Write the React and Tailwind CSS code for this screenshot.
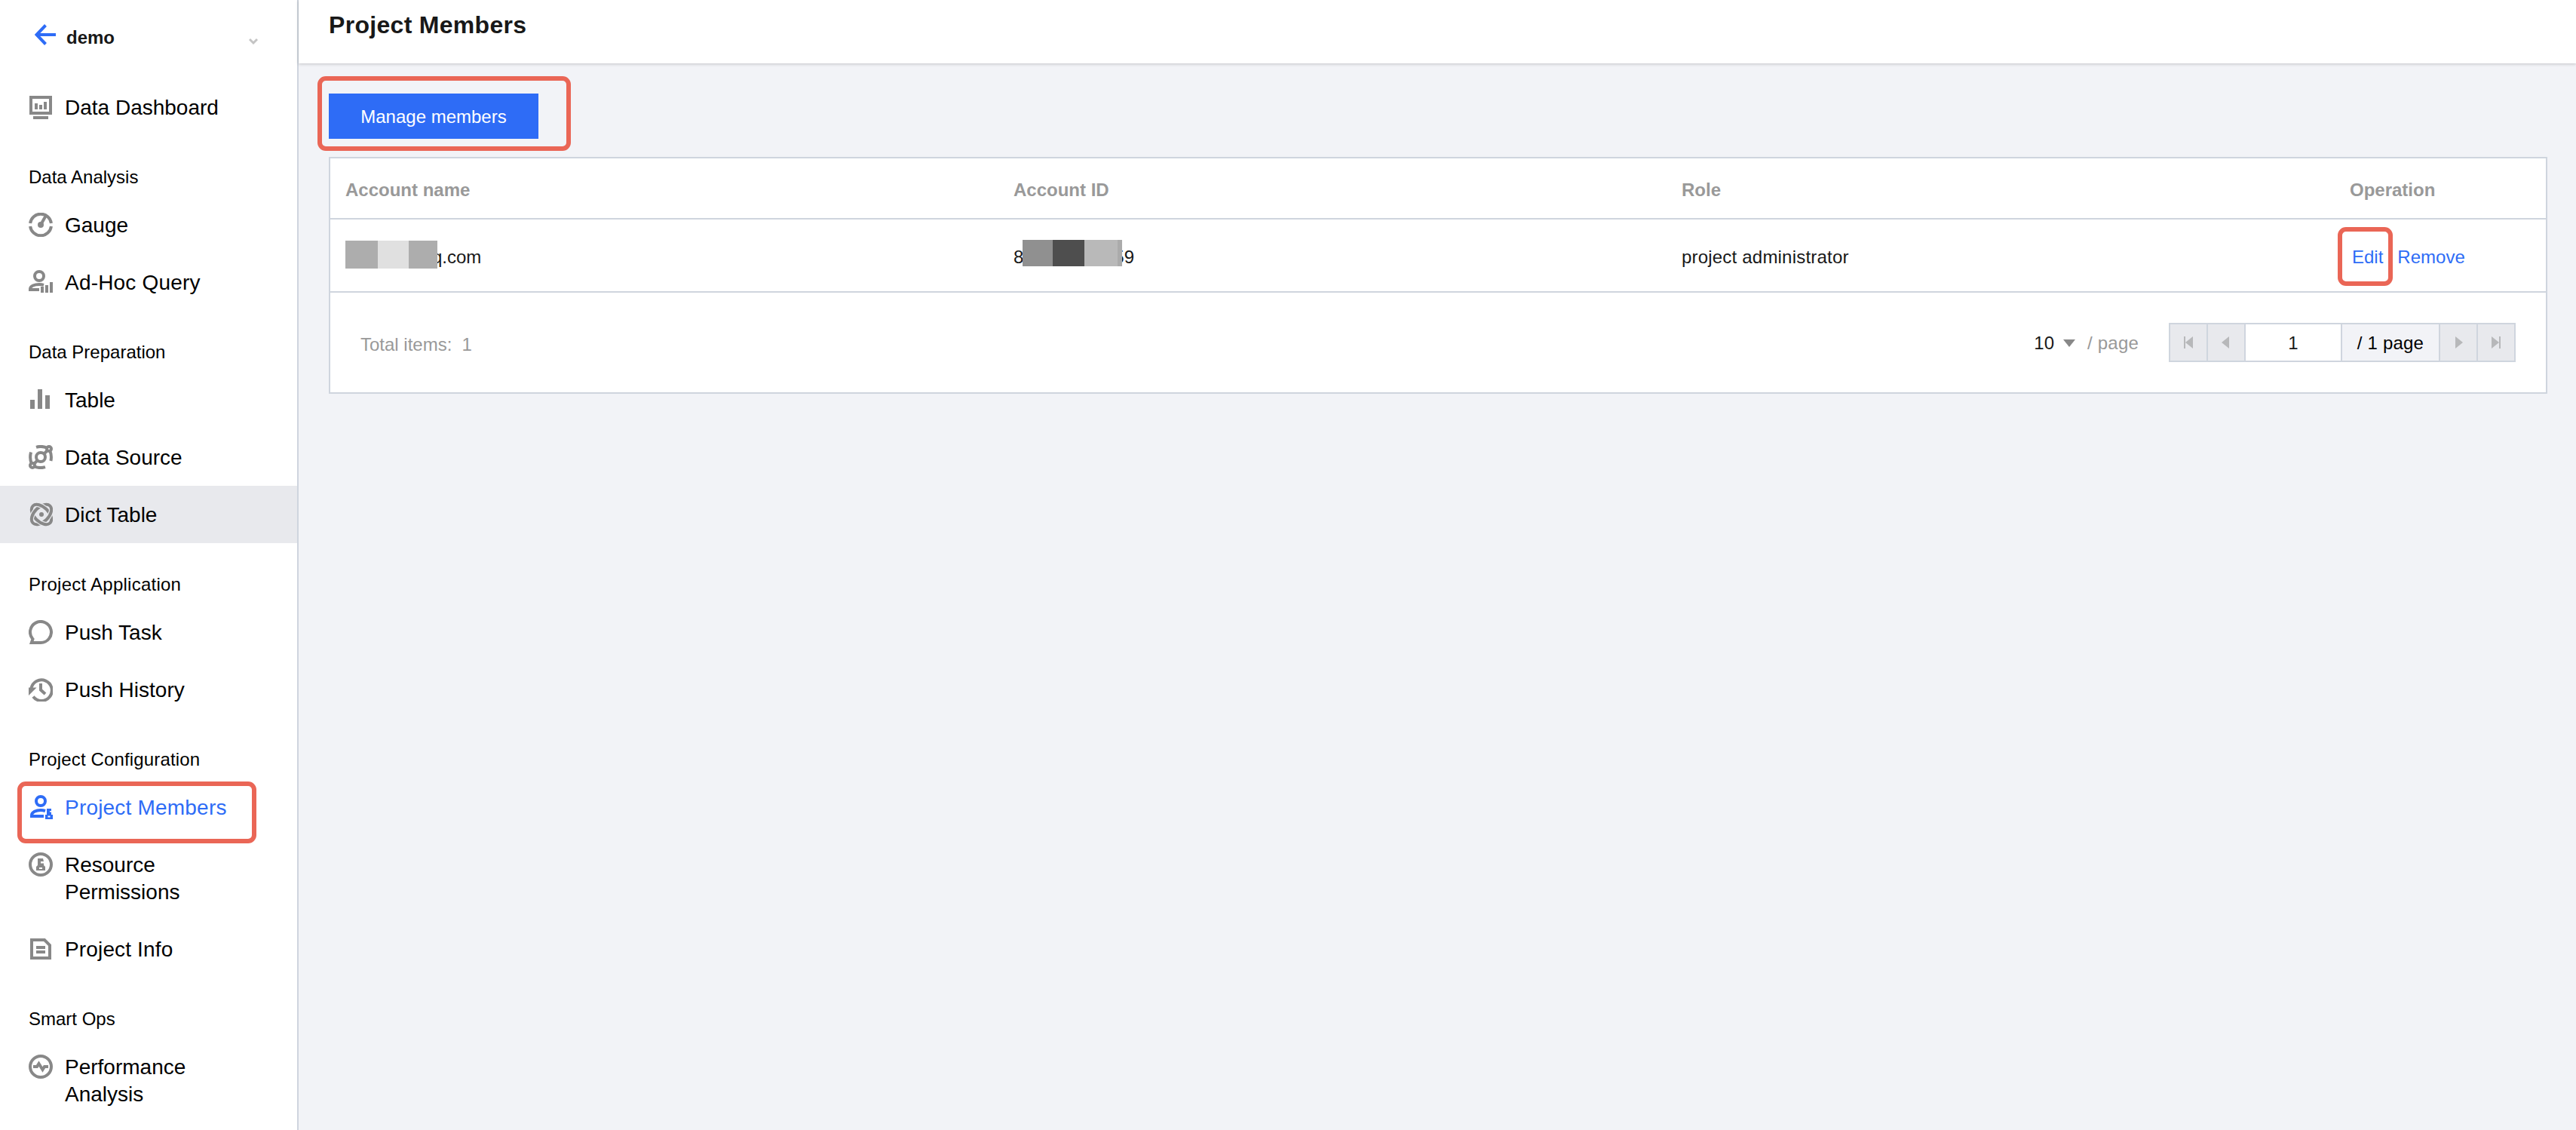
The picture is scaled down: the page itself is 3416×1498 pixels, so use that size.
import { useState } from 'react';
import clsx from 'clsx';

const Icon = ({ children, className }) => (
  <svg
    className={clsx('w-8 h-8 flex-shrink-0 mt-0.5', className)}
    viewBox="0 0 32 32"
    fill="none"
    stroke="currentColor"
    strokeWidth={4}
  >
    {children}
  </svg>
);

const DashboardIcon = () => (
  <Icon>
    <rect x="3" y="3" width="26" height="21" />
    <path d="M10 11v8M16 13v6M22 9v10M6 30h20" />
  </Icon>
);

const GaugeIcon = () => (
  <Icon>
    <path d="M2.1 14a14 14 0 0 1 27.8 0M2.1 18a14 14 0 0 0 27.8 0" />
    <path d="M16 16L22.5 4.5" />
    <circle cx="16" cy="16" r="4" fill="currentColor" stroke="none" />
  </Icon>
);

const QueryIcon = () => (
  <Icon>
    <circle cx="14" cy="8" r="6" />
    <path d="M14 26H2v-1c0-4 6-6 12-6 2.3 0 4.3.3 6 .8" />
    <path d="M18 22v8M24 20v10M30 16v14" />
  </Icon>
);

const TableIcon = () => (
  <Icon>
    <path d="M5 16v12M15 2v26M25 10v18" strokeWidth={6} />
  </Icon>
);

const SourceIcon = () => (
  <Icon>
    <circle cx="16" cy="16" r="6" />
    <path d="M10 2.8c4-1.200 10-1.200 15 1.200M28 7c2 4.500 2.400 9.500 1.400 14" />
    <path d="M22 29.200c-4 1.200-10 1.200-15-1.200M4 25C2 20.500 1.600 15 3 9.500" />
    <circle cx="27" cy="5" r="3" />
    <circle cx="5" cy="27" r="3" />
    <path d="M25 7l-5 5M7 25l5-5" />
  </Icon>
);

const DictIcon = () => (
  <Icon>
    <clipPath id="dict-weave">
      <path d="M10 0h14v11H10zM10 21h14v11H10z" />
    </clipPath>
    <ellipse cx="17" cy="16" rx="16" ry="9.5" transform="rotate(45 17 16)" />
    <ellipse cx="17" cy="16" rx="16" ry="9.5" transform="rotate(-45 17 16)" className="stroke-[#e8e9ed]" strokeWidth={6.5} />
    <ellipse cx="17" cy="16" rx="16" ry="9.5" transform="rotate(-45 17 16)" />
    <g clipPath="url(#dict-weave)">
      <ellipse cx="17" cy="16" rx="16" ry="9.5" transform="rotate(45 17 16)" className="stroke-[#e8e9ed]" strokeWidth={6.5} />
      <ellipse cx="17" cy="16" rx="16" ry="9.5" transform="rotate(45 17 16)" />
    </g>
    <circle cx="17" cy="16" r="3" fill="currentColor" stroke="none" />
  </Icon>
);

const ChatIcon = () => (
  <Icon>
    <path d="M16 30A14 14 0 1 0 5.5 25.3L3.8 30z" />
  </Icon>
);

const HistoryIcon = () => (
  <Icon>
    <path d="M3.4 15A13.8 13.8 0 1 1 6 25.5" />
    <path d="M0 13.5h10.5L0 24z" fill="currentColor" stroke="none" />
    <path d="M16 8v8.5l6 5.5" />
  </Icon>
);

const MembersIcon = () => (
  <Icon>
    <circle cx="16" cy="8" r="6" />
    <path d="M20 28H4v-1c0-4.5 6-7 12-7 2.2 0 4.2.4 6 1" />
    <path
      d="M24 18h6v3h-2v1.5h2V26h2v6H22v-6h2zM25.5 27.5v2h3v-2z"
      fill="currentColor"
      fillRule="evenodd"
      stroke="none"
    />
  </Icon>
);

const PermissionIcon = () => (
  <Icon>
    <circle cx="16" cy="16" r="14" />
    <path
      d="M12 8h7l1 4h-4v2.5h4V17l2 2v5H10v-5l2-2zM14 20v2h4v-2z"
      fill="currentColor"
      fillRule="evenodd"
      stroke="none"
    />
  </Icon>
);

const InfoIcon = () => (
  <Icon>
    <path d="M4 4h17l7 7v17H4zM10 14h12M10 20h12" />
  </Icon>
);

const PerformanceIcon = () => (
  <Icon>
    <circle cx="16" cy="16" r="14" />
    <path d="M6 16h5l2.5-4 5 8 2.5-4h5" />
  </Icon>
);

const navGroups = [
  { items: [{ id: 'dashboard', label: 'Data Dashboard', icon: DashboardIcon }] },
  {
    title: 'Data Analysis',
    items: [
      { id: 'gauge', label: 'Gauge', icon: GaugeIcon },
      { id: 'query', label: 'Ad-Hoc Query', icon: QueryIcon, className: 'tracking-[0.2px]' },
    ],
  },
  {
    title: 'Data Preparation',
    items: [
      { id: 'table', label: 'Table', icon: TableIcon },
      { id: 'source', label: 'Data Source', icon: SourceIcon },
      { id: 'dict', label: 'Dict Table', icon: DictIcon, hovered: true },
    ],
  },
  {
    title: 'Project Application',
    className: 'tracking-[0.25px]',
    items: [
      { id: 'task', label: 'Push Task', icon: ChatIcon },
      { id: 'history', label: 'Push History', icon: HistoryIcon },
    ],
  },
  {
    title: 'Project Configuration',
    className: 'tracking-[0.15px]',
    items: [
      { id: 'members', label: 'Project Members', icon: MembersIcon, className: 'tracking-[0.2px]' },
      { id: 'permissions', label: 'Resource Permissions', icon: PermissionIcon },
      { id: 'info', label: 'Project Info', icon: InfoIcon, className: 'tracking-[0.15px]' },
    ],
  },
  {
    title: 'Smart Ops',
    items: [{ id: 'performance', label: 'Performance Analysis', icon: PerformanceIcon }],
  },
];

// Red frame drawn over the item it belongs to
const Highlight = ({ className }) => (
  <div className={clsx('absolute border-[6px] border-[#ea6656] rounded-[11px] pointer-events-none', className)} />
);

const NavItem = ({ item, active, onSelect }) => {
  const ItemIcon = item.icon;
  return (
    <button
      className={clsx(
        'relative w-full flex items-start gap-4 pl-[38px] pr-20 pt-5 pb-[19px] text-left text-[28px] leading-9',
        item.hovered && 'bg-[#e8e9ed]',
        active ? 'text-[#2e6cf6]' : 'text-black'
      )}
      onClick={() => onSelect(item.id)}
    >
      <span className={active ? 'text-[#2e6cf6]' : 'text-[#888888]'}>
        <ItemIcon />
      </span>
      <span className={clsx('pt-px', active && 'whitespace-nowrap', item.className)}>{item.label}</span>
      {active && <Highlight className="left-[23px] top-1 w-[317px] h-[82px] z-10" />}
    </button>
  );
};

const Sidebar = () => {
  const [active, setActive] = useState('members');

  return (
    <aside className="w-[396px] flex-shrink-0 bg-white border-r-2 border-[#cfd5de]">
      <div className="h-[104px] flex items-start pl-[46px] pr-[52px] pt-8">
        <svg className="w-7 h-7 flex-shrink-0 text-[#2e6cf6]" viewBox="0 0 28 28" fill="none" stroke="currentColor" strokeWidth={4}>
          <path d="M14.5 1.5L2.5 14l12 12.5M3 14h25" />
        </svg>
        <span className="ml-3.5 text-2xl leading-9 font-bold text-[#181818]">demo</span>
        <svg className="ml-auto mt-[18px] w-3 h-2.5" viewBox="0 0 12 10" fill="none" stroke="#c4c4c4" strokeWidth={3}>
          <path d="M1 2l5 5 5-5" />
        </svg>
      </div>
      <nav>
        {navGroups.map((group) => (
          <div key={group.title || 'top'}>
            {group.title && (
              <div className={clsx('h-20 pl-[38px] pt-[37px] text-2xl leading-9 text-black', group.className)}>
                {group.title}
              </div>
            )}
            {group.items.map((item) => (
              <NavItem key={item.id} item={item} active={item.id === active} onSelect={setActive} />
            ))}
          </div>
        ))}
      </nav>
    </aside>
  );
};

const MembersTable = () => (
  <div className="mt-6 h-[314px] bg-white border-2 border-[#cfd5de] text-2xl leading-9 text-[#181818]">
    <div className="h-[81px] grid grid-cols-[886px_886px_886px_1fr] pt-6 border-b-2 border-[#cfd5de] font-bold text-[#999999]">
      <div className="pl-5">Account name</div>
      <div className="pl-5">Account ID</div>
      <div className="pl-5">Role</div>
      <div className="pl-5">Operation</div>
    </div>
    <div className="h-[97px] grid grid-cols-[886px_886px_886px_1fr] border-b-2 border-[#cfd5de]">
      <div className="relative pl-[135px] pt-8">
        q.com
        <div className="absolute left-5 top-7 flex h-[37px]">
          <div className="w-[43px] bg-[#adadad]" />
          <div className="w-[41px] bg-[#e0e0e0]" />
          <div className="w-[38px] bg-[#adadad]" />
        </div>
      </div>
      <div className="relative flex pl-5 pt-8">
        <span>8</span>
        <span className="ml-[120px]">59</span>
        <div className="absolute left-8 top-[27px] flex h-[35px]">
          <div className="w-10 bg-[#909090]" />
          <div className="w-[42px] bg-[#4e4e4e]" />
          <div className="w-11 bg-[#b9b9b9]" />
          <div className="w-1.5 bg-[#ababab]" />
        </div>
      </div>
      <div className="pl-5 pt-8 tracking-[0.2px]">project administrator</div>
      <div className="relative flex gap-[19px] pl-[23px] pt-8 text-[#2e6cf6]">
        <a href="#edit">Edit</a>
        <a href="#remove">Remove</a>
        <Highlight className="left-1 top-2.5 w-[73px] h-[78px]" />
      </div>
    </div>
    <div className="flex items-start pl-10 pr-10 pt-10">
      <div className="mt-[11px] text-[#999999] flex gap-[13px]">
        <span>Total items:</span>
        <span>1</span>
      </div>
      <div className="ml-auto mt-[9px] flex items-center">
        <span>10</span>
        <svg className="ml-3 w-4 h-2.5" viewBox="0 0 16 10" fill="#888888">
          <path d="M0 0h16L8 10z" />
        </svg>
        <span className="ml-4 text-[#999999] tracking-[0.2px]">/ page</span>
      </div>
      <Pager />
    </div>
  </div>
);

const PagerButton = ({ children }) => (
  <button className="w-[50px] flex items-center justify-center bg-[#e8e9ed] border-r-2 border-[#cfd5de]">
    <svg className="w-4 h-4" viewBox="0 0 16 16" fill="#b7b8ba">
      {children}
    </svg>
  </button>
);

const Pager = () => (
  <div className="ml-10 h-[52px] flex border-2 border-r-0 border-[#cfd5de] text-black">
    <PagerButton>
      <path d="M2 0h2v16H2zM14 0v16L4 8z" />
    </PagerButton>
    <PagerButton>
      <path d="M12 0v16L2 8z" />
    </PagerButton>
    <div className="w-32 pt-[7px] text-center border-r-2 border-[#cfd5de] text-[#181818]">1</div>
    <div className="w-[130px] pt-[7px] text-center tracking-[0.2px] bg-[#f2f3f7] border-r-2 border-[#cfd5de]">/ 1 page</div>
    <PagerButton>
      <path d="M4 0v16l10-8z" />
    </PagerButton>
    <PagerButton>
      <path d="M2 0v16l10-8zM12 0h2v16h-2z" />
    </PagerButton>
  </div>
);

const App = () => {
  return (
    <div className="flex h-[1498px] w-[3416px] overflow-hidden bg-[#f2f3f7] font-['Liberation_Sans',sans-serif]">
      <Sidebar />
      <div className="flex-1 flex flex-col">
        <header className="h-[84px] flex-shrink-0 bg-white pl-10 pt-[13px] shadow-[0_1px_4px_rgba(0,0,0,0.2)]">
          <h1 className="text-[32px] leading-10 font-bold tracking-[0.3px] text-[#181818]">Project Members</h1>
        </header>
        <main className="flex-1 pl-10 pr-[38px] pt-10">
          <div className="relative flex">
            <button className="w-[278px] h-[60px] pt-0.5 bg-[#2e6cf6] text-2xl text-white">Manage members</button>
            <Highlight className="-left-[15px] -top-[23px] w-[336px] h-[99px]" />
          </div>
          <MembersTable />
        </main>
      </div>
    </div>
  );
};

export default App;
